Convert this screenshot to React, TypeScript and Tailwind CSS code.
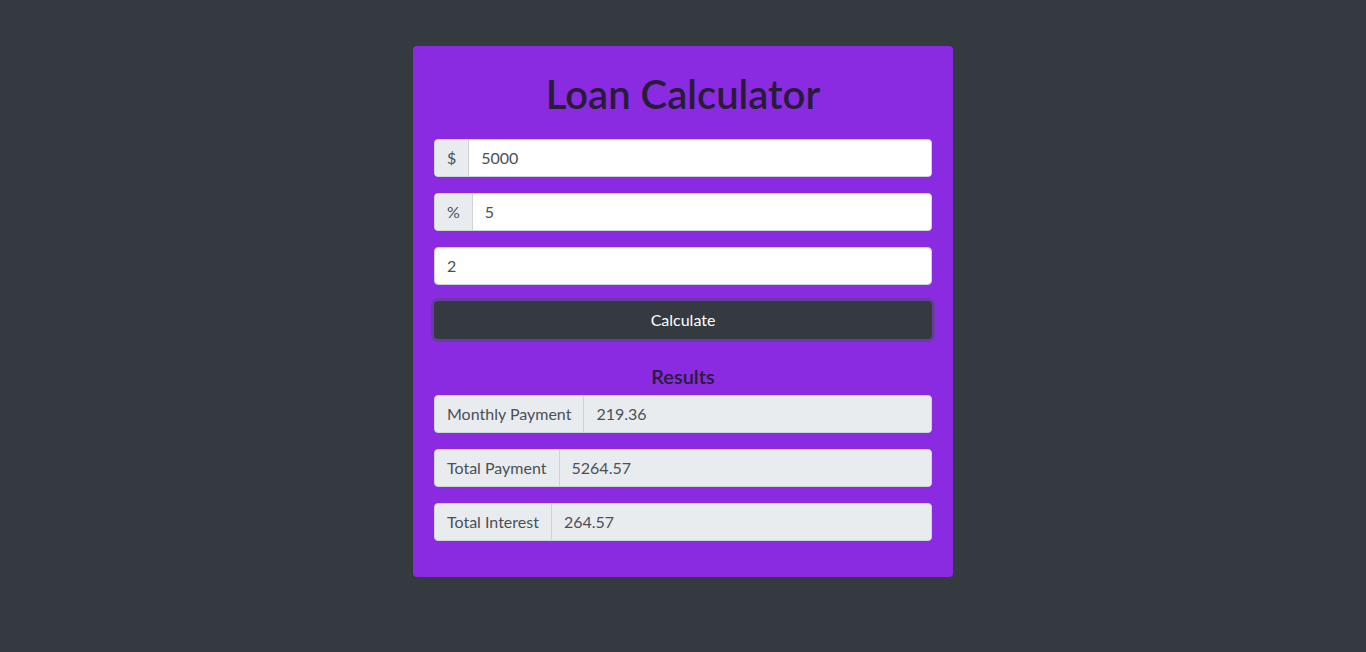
import React from "react";

const font = { fontFamily: '"Segoe UI", Lato, "Open Sans", sans-serif' };

function PrependInput({ addon, value }: { addon: string; value: string }) {
  return (
    <div className="flex h-[38px] w-full mb-4 rounded border border-[#ced4da] overflow-hidden bg-white">
      <span className="flex items-center px-3 bg-[#e9ecef] border-r border-[#ced4da] text-[#495057] text-base">
        {addon}
      </span>
      <input
        className="flex-1 px-3 text-base text-[#495057] outline-none bg-white"
        defaultValue={value}
      />
    </div>
  );
}

function ResultRow({ label, value }: { label: string; value: string }) {
  return (
    <div className="flex h-[38px] w-full mb-4 rounded border border-[#ced4da] overflow-hidden bg-[#e9ecef]">
      <span className="flex items-center px-3 border-r border-[#ced4da] text-[#495057] text-base whitespace-nowrap">
        {label}
      </span>
      <input
        readOnly
        className="flex-1 px-3 text-base text-[#495057] outline-none bg-[#e9ecef]"
        value={value}
      />
    </div>
  );
}

export default function App() {
  return (
    <div
      className="min-h-[652px] w-full bg-[#343a40] flex justify-center pt-[46px]"
      style={font}
    >
      <div className="w-[540px] h-[531px] bg-[#8a2be2] rounded px-[21px] pt-[24px] pb-[20px]">
        <h1 className="text-center text-[40px] leading-[48px] font-semibold text-[#281c36] mb-[21px]">
          Loan Calculator
        </h1>
        <PrependInput addon="$" value="5000" />
        <PrependInput addon="%" value="5" />
        <div className="flex h-[38px] w-full mb-4 rounded border border-[#ced4da] overflow-hidden bg-white">
          <input
            className="flex-1 px-3 text-base text-[#495057] outline-none bg-white"
            defaultValue="2"
          />
        </div>
        <button className="w-full h-[38px] rounded bg-[#343a40] text-white text-base shadow-[0_0_0_3px_#6a3aa5]">
          Calculate
        </button>
        <h5 className="mt-[25px] mb-[7px] text-center text-xl leading-6 font-semibold text-[#281c36]">
          Results
        </h5>
        <ResultRow label="Monthly Payment" value="219.36" />
        <ResultRow label="Total Payment" value="5264.57" />
        <ResultRow label="Total Interest" value="264.57" />
      </div>
    </div>
  );
}
